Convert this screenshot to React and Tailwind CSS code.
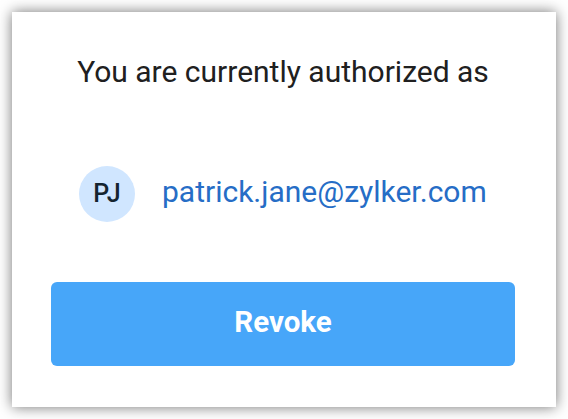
export default function App() {
  return (
    <div className="h-[419px] w-[568px] overflow-hidden bg-white pt-3 pl-3 font-['Roboto',sans-serif]">
      <main className="flex h-[395px] w-[544px] flex-col items-center bg-white pr-[41px] pl-[39px] shadow-[0_0_13px_rgba(0,0,0,0.55)]">
        <h1 className="mt-[42px] h-9 text-[30px] leading-9 font-normal whitespace-nowrap text-[#202020]">
          You are currently authorized as
        </h1>
        <div className="mt-[76px] flex h-14 w-[408px] items-center">
          <div className="flex h-14 w-14 shrink-0 items-center justify-center rounded-full bg-[#d0e6ff] text-[25px] font-medium text-[#14242f]">
            PJ
          </div>
          <span className="ml-[27px] pb-1 text-[30px] leading-9 whitespace-nowrap text-[#266dc6]">
            patrick.jane@zylker.com
          </span>
        </div>
        <button className="mt-[60px] h-[84px] w-[464px] shrink-0 rounded-md bg-[#47a6f9] pb-1 text-[29.5px] font-bold text-white">
          Revoke
        </button>
      </main>
    </div>
  );
}
